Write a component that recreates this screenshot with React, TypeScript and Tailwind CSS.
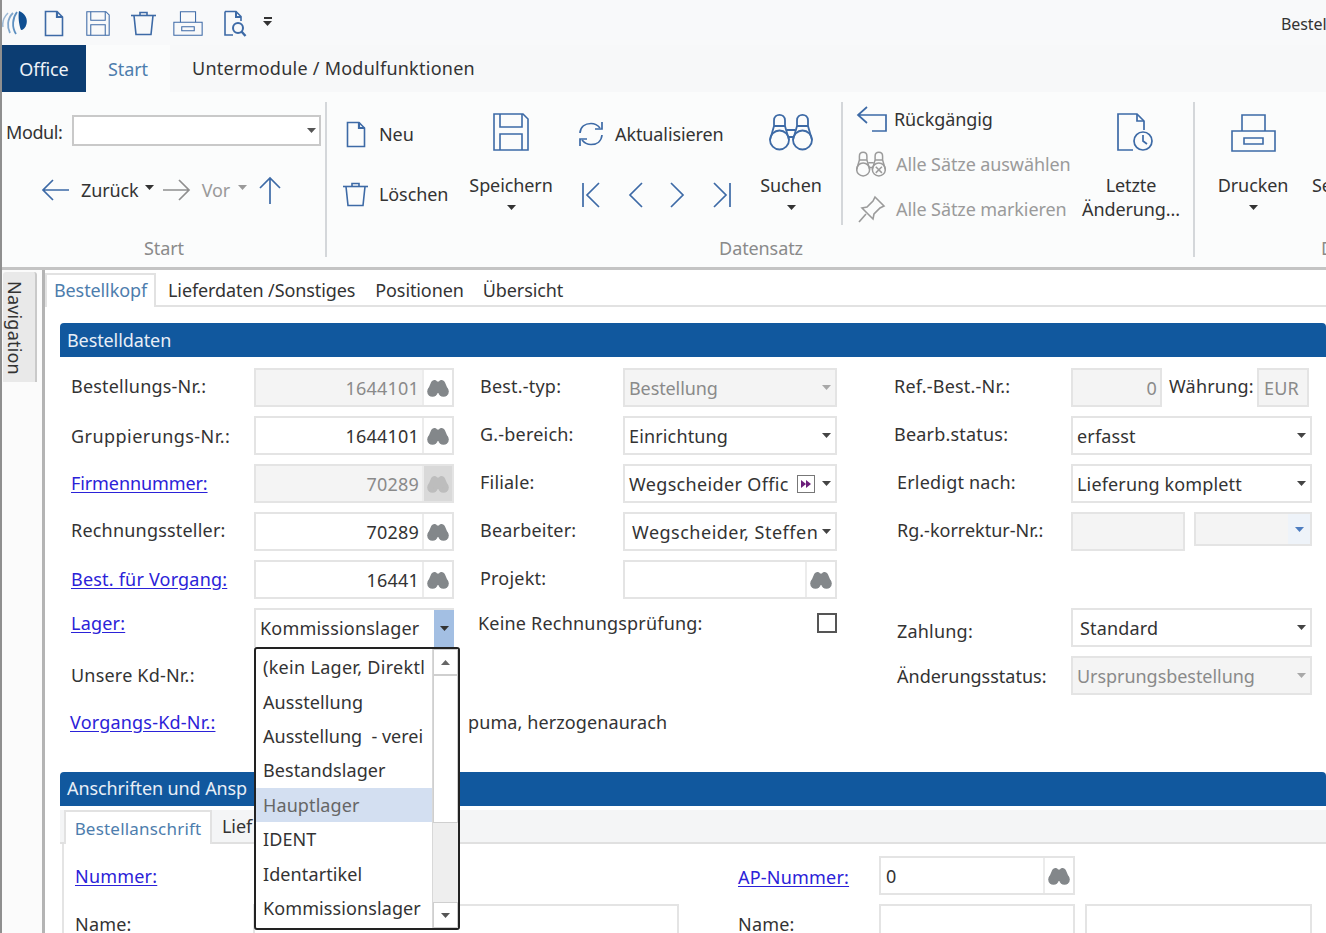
import React from "react";

const S = "#3d6aa6";
const G = "#9b9b9b";

function Ic({ w, h, vb, children, className = "" }: { w: number; h: number; vb?: string; children: React.ReactNode; className?: string }) {
  return (
    <svg width={w} height={h} viewBox={vb ?? `0 0 ${w} ${h}`} fill="none" stroke={S} strokeWidth={1.6} className={`block shrink-0 ${className}`}>
      {children}
    </svg>
  );
}

const Doc = ({ w = 20, h = 27 }: { w?: number; h?: number }) => (
  <Ic w={w} h={h} vb="0 0 20 27"><path d="M1.5 1.5H13L18.5 7V25.5H1.5Z" /><path d="M13 1.5V7H18.5" strokeWidth={2.2} /></Ic>
);
const Trash = ({ w = 27, h = 25 }: { w?: number; h?: number }) => (
  <Ic w={w} h={h} vb="0 0 27 25"><path d="M1 4.5H26" /><path d="M4 4.5L6 23.5H21L23 4.5" /><path d="M10 4.5V1.5H17V4.5" /></Ic>
);
const Floppy = ({ w = 36, h = 38 }: { w?: number; h?: number }) => (
  <Ic w={w} h={h} vb="0 0 36 38"><path d="M1 1H30L35 6V37H1Z" /><path d="M7 1V14H29V1" /><path d="M7 37V21H29V37" /></Ic>
);
const Printer = ({ w = 45, h = 38 }: { w?: number; h?: number }) => (
  <Ic w={w} h={h} vb="0 0 45 38"><path d="M11 17V1H34V17" /><path d="M1 17H44V37H1Z" /><path d="M13 24H32V30H13Z" /></Ic>
);
const PreviewDoc = () => (
  <Ic w={24} h={27}><path d="M2 1.5H13L18 6.5V11" /><path d="M13 1.5V7H18" strokeWidth={2} /><path d="M2 1.5V25H10" /><circle cx={15} cy={18} r={5} strokeWidth={2} /><path d="M18.5 21.5L22.5 26" strokeWidth={2.4} /></Ic>
);
const BinoLarge = ({ color = S, w = 44, h = 38, cross = false }: { color?: string; w?: number; h?: number; cross?: boolean }) => (
  <svg width={w} height={h} viewBox="0 0 44 38" fill="none" stroke={color} strokeWidth={w < 40 ? 2.2 : 1.8} className="block shrink-0">
    <circle cx={10.5} cy={27} r={9.5} />
    <circle cx={33.5} cy={27} r={9.5} />
    <path d="M1 27L5 13V7.5C5 0 16 0 16 7.5V13L20 27" />
    <path d="M43 27L39 13V7.5C39 0 28 0 28 7.5V13L24 27" />
    <path d="M5 13H16M28 13H39" />
    <path d="M18 17H26M20 24H24" />
    {cross && <path d="M29 23L38 32M38 23L29 32" />}
  </svg>
);
const BinoSmall = ({ light = false }: { light?: boolean }) => (
  <svg width={22} height={18} viewBox="0 0 22 18" fill={light ? "#bdbdbd" : "#83878a"} className="block">
    <circle cx={5.5} cy={12.5} r={5.3} />
    <circle cx={16.5} cy={12.5} r={5.3} />
    <path d="M0.8 11L4 3.5C5 0.5 9 0.2 10 2.5H12C13 0.2 17 0.5 18 3.5L21.2 11L13 14H9Z" />
  </svg>
);
const Caret = ({ color = "#333", className = "" }: { color?: string; className?: string }) => (
  <svg width={9} height={5} viewBox="0 0 9 5" fill={color} className={`block shrink-0 ${className}`}><path d="M0 0H9L4.5 5Z" /></svg>
);
const ArrowL = ({ color = S }: { color?: string }) => (
  <svg width={28} height={24} viewBox="0 0 28 24" fill="none" stroke={color} strokeWidth={1.7} className="block shrink-0"><path d="M28 12H2M12 2L2 12L12 22" /></svg>
);
const ArrowR = () => (
  <svg width={28} height={24} viewBox="0 0 28 24" fill="none" stroke="#8f8f8f" strokeWidth={1.7} className="block shrink-0"><path d="M0 12H26M16 2L26 12L16 22" /></svg>
);
const ArrowU = () => (
  <svg width={24} height={28} viewBox="0 0 24 28" fill="none" stroke={S} strokeWidth={1.7} className="block shrink-0"><path d="M12 28V2M2 12L12 2L22 12" /></svg>
);

const Logo = () => (
  <svg width={26} height={26} viewBox="0 0 26 26" fill="none" className="block shrink-0">
    <path d="M1 17C0 12 2 7 6 3" stroke="#9dbad6" strokeWidth={1.5} />
    <path d="M8 23C5 17 5 9 11 3" stroke="#7fa6cc" strokeWidth={1.8} />
    <path d="M14 24C9.5 17 10.5 8 15 2" stroke="#5c8fc0" strokeWidth={1.8} />
    <path d="M17 1C23 3 26 9 24.5 14C23.5 18 21 20 19 20C17 15 16 7 17 1Z" fill="#0f4f92" />
  </svg>
);

function Link({ children, className = "" }: { children: React.ReactNode; className?: string }) {
  return <span className={`text-[#2b22d8] underline underline-offset-2 ${className}`}>{children}</span>;
}

function Field({ w, value, right, disabled, bino, lightBino, className = "", textClass = "" }: {
  w: number; value?: string; right?: boolean; disabled?: boolean; bino?: boolean; lightBino?: boolean; className?: string; textClass?: string;
}) {
  return (
    <div style={{ width: w }} className={`h-[39px] shrink-0 flex border-2 border-[#e4e4e4] ${disabled ? "bg-[#f4f4f4] text-[#8a8a8a]" : "bg-white text-[#333]"} ${className}`}>
      <div className={`flex-1 min-w-0 flex items-center overflow-hidden whitespace-nowrap tracking-[0.2px] ${right ? "justify-end pr-[3px]" : "pl-[5px]"} ${textClass}`}>{value}</div>
      {bino && (
        <div className={`w-[30px] shrink-0 flex items-center justify-center border-l-2 border-[#ececec] ${lightBino ? "bg-[#d9d9d9]" : "bg-white"}`}>
          <BinoSmall light={lightBino} />
        </div>
      )}
    </div>
  );
}

function Combo({ w, value, disabled, children, textClass = "tracking-[0.15px]" }: { w: number; value?: string; disabled?: boolean; children?: React.ReactNode; textClass?: string }) {
  return (
    <div style={{ width: w }} className={`h-[39px] shrink-0 flex items-center border-2 border-[#e4e4e4] ${disabled ? "bg-[#f4f4f4] text-[#8a8a8a]" : "bg-white text-[#333]"}`}>
      <div className={`flex-1 min-w-0 overflow-hidden whitespace-nowrap pl-[4px] ${textClass}`}>{value}</div>
      {children}
      <Caret color={disabled ? "#a8a8a8" : "#444"} className="mx-[4px]" />
    </div>
  );
}

const rowCls = "flex h-[48px] items-start";

function Label({ w, children, className = "" }: { w: number; children: React.ReactNode; className?: string }) {
  return <div style={{ width: w }} className={`shrink-0 h-[39px] flex items-center whitespace-nowrap tracking-[0.2px] ${className}`}>{children}</div>;
}

export default function App() {
  return (
    <div className="w-[1326px] h-[933px] overflow-hidden relative bg-white text-[#333] text-[18px] leading-[24px] [font-family:'Noto_Sans',sans-serif] border-l-2 border-[#8f8f8f] tracking-[-0.1px]">
      {/* quick access */}
      <div className="h-[45px] bg-[#f8f9fa] flex items-center relative">
        <div className="mt-[1px]"><Logo /></div>
        <div className="ml-[16px] mt-[2px]"><Doc /></div>
        <div className="ml-[22px] mt-[2px]"><Floppy w={24} h={25} /></div>
        <div className="ml-[20px] mt-[2px]"><Trash /></div>
        <div className="ml-[16px] mt-[2px]"><Printer w={30} h={25} /></div>
        <div className="ml-[20px] mt-[2px]"><PreviewDoc /></div>
        <div className="ml-[16px] -mt-[3px] flex flex-col gap-[2px] items-center"><div className="w-[8px] h-[2px] bg-[#333]" /><Caret /></div>
        <div className="ml-auto mt-[3px] text-[16px] text-[#333] w-[45px] overflow-hidden whitespace-nowrap">Bestellung</div>
      </div>
      {/* tabs */}
      <div className="h-[47px] bg-[#f7f8f9] flex">
        <div className="w-[84px] bg-[#0c3d72] text-[#eef3f8] flex items-center justify-center">Office</div>
        <div className="w-[84px] bg-[#fbfcfc] text-[#4d7dad] flex items-center justify-center">Start</div>
        <div className="ml-[22px] -mt-[1px] flex items-center text-[#333] tracking-[0.25px]">Untermodule / Modulfunktionen</div>
      </div>
      {/* ribbon */}
      <div className="h-[178px] bg-[#fbfcfc] border-b-[3px] border-[#c4c4c4] flex overflow-hidden">
        {/* Start group */}
        <div className="w-[323px] shrink-0 flex flex-col">
          <div className="h-[144px] pt-[23px]">
            <div className="flex items-center h-[31px] pl-[4px]">
              <span className="w-[66px] shrink-0 whitespace-nowrap mt-[2px] tracking-[-0.4px]">Modul:</span>
              <div className="w-[249px] h-[31px] shrink-0 bg-white border-2 border-[#c9c9c9] flex items-center justify-end pr-[3px]"><Caret color="#555" /></div>
            </div>
            <div className="flex items-center mt-[28px] pl-[39px] h-[32px]">
              <ArrowL />
              <span className="ml-[12px]">Zurück</span>
              <Caret className="ml-[6px] mb-[6px]" />
              <div className="ml-[9px]"><ArrowR /></div>
              <span className="ml-[11px] text-[#9a9a9a]">Vor</span>
              <Caret color="#9a9a9a" className="ml-[8px] mb-[6px]" />
              <div className="ml-[11px]"><ArrowU /></div>
            </div>
          </div>
          <div className="h-[22px] text-center text-[#8a8a8a] pl-[1px]">Start</div>
        </div>
        <div className="w-[2px] h-[155px] mt-[10px] bg-[#d4d7da] shrink-0" />
        {/* Datensatz */}
        <div className="w-[866px] shrink-0 flex flex-col">
          <div className="h-[144px] flex items-start pt-[21px]">
            <div className="ml-[15px] w-[128px] shrink-0 flex flex-col">
              <div className="h-[42px] flex items-center"><div className="ml-[4px] w-[33px]"><Doc /></div>Neu</div>
              <div className="h-[42px] mt-[18px] flex items-center"><div className="w-[37px]"><Trash /></div>Löschen</div>
            </div>
            <div className="w-[82px] shrink-0 flex flex-col items-center">
              <Floppy />
              <span className="mt-[22px]">Speichern</span>
              <Caret className="mt-[8px]" />
            </div>
            <div className="ml-[26px] w-[154px] shrink-0 flex flex-col">
              <div className="h-[42px] flex items-center">
                <svg width={26} height={26} viewBox="0 0 26 26" fill="none" stroke={S} strokeWidth={1.7} className="block shrink-0">
                  <path d="M2 12C2.5 6 7 2.5 13 2.5C17 2.5 20 4.5 22 7" />
                  <path d="M24 1V8H17" />
                  <path d="M24 14C23.5 20 19 23.5 13 23.5C9 23.5 6 21.5 4 19" />
                  <path d="M2 25V18H9" />
                </svg>
                <span className="ml-[11px] whitespace-nowrap">Aktualisieren</span>
              </div>
              <div className="h-[42px] mt-[19px] flex items-center justify-between">
                <svg width={20} height={26} viewBox="0 0 20 26" fill="none" stroke={S} strokeWidth={1.7} className="block ml-[3px]"><path d="M2 1V25M18 1L6 13L18 25" /></svg>
                <svg width={16} height={26} viewBox="0 0 16 26" fill="none" stroke={S} strokeWidth={1.7} className="block"><path d="M15 1L3 13L15 25" /></svg>
                <svg width={16} height={26} viewBox="0 0 16 26" fill="none" stroke={S} strokeWidth={1.7} className="block"><path d="M1 1L13 13L1 25" /></svg>
                <svg width={20} height={26} viewBox="0 0 20 26" fill="none" stroke={S} strokeWidth={1.7} className="block"><path d="M18 1V25M2 1L14 13L2 25" /></svg>
              </div>
            </div>
            <div className="ml-[28px] w-[62px] shrink-0 flex flex-col items-center">
              <BinoLarge />
              <span className="mt-[22px]">Suchen</span>
              <Caret className="mt-[8px]" />
            </div>
            <div className="ml-[19px] w-[2px] h-[123px] -mt-[11px] bg-[#d4d7da] shrink-0" />
            <div className="ml-[13px] w-[225px] shrink-0 flex flex-col -mt-[17px] whitespace-nowrap">
              <div className="h-[45px] flex items-center">
                <svg width={32} height={28} viewBox="0 0 32 28" fill="none" stroke={S} strokeWidth={1.7} className="block shrink-0"><path d="M11 2L2 10L11 18M2 10H30V26H16" /></svg>
                <span className="ml-[6px]">Rückgängig</span>
              </div>
              <div className="h-[45px] flex items-center text-[#9a9a9a]">
                <BinoLarge color={G} w={30} h={26} cross />
                <span className="ml-[10px]">Alle Sätze auswählen</span>
              </div>
              <div className="h-[45px] flex items-center text-[#9a9a9a]">
                <svg width={28} height={28} viewBox="0 0 28 28" fill="none" stroke={G} strokeWidth={1.6} className="block shrink-0 ml-[2px]"><path d="M17 2L26 11L22 13L16 19L15 24L4 13L9 12L15 6Z" /><path d="M8 19L1 27" /></svg>
                <span className="ml-[10px]">Alle Sätze markieren</span>
              </div>
            </div>
            <div className="w-[100px] shrink-0 flex flex-col items-center">
              <svg width={36} height={38} viewBox="0 0 36 38" fill="none" stroke={S} strokeWidth={1.7} className="block shrink-0 ml-[8px]"><path d="M16 37H1V1H20L27 8V17" /><path d="M20 1V8H27" /><circle cx={26} cy={28} r={9} /><path d="M26 22V28L30 31" /></svg>
              <span className="mt-[22px]">Letzte</span>
              <span className="whitespace-nowrap">Änderung...</span>
            </div>
          </div>
          <div className="h-[22px] text-center text-[#8a8a8a] pl-[2px]">Datensatz</div>
        </div>
        <div className="w-[2px] h-[155px] mt-[10px] bg-[#d4d7da] shrink-0" />
        {/* Ausgabe */}
        <div className="flex-1 flex flex-col min-w-0">
          <div className="h-[144px] flex items-start pt-[22px]">
            <div className="ml-[22px] w-[72px] shrink-0 flex flex-col items-center">
              <Printer />
              <span className="mt-[21px]">Drucken</span>
              <Caret className="mt-[8px]" />
            </div>
            <div className="ml-[23px] mt-[59px]">Se</div>
          </div>
          <div className="h-[22px] pl-[126px] text-[#8a8a8a]">D</div>
        </div>
      </div>

      {/* main */}
      <div className="flex h-[663px]">
        {/* rail */}
        <div className="w-[40px] shrink-0 bg-[#fbfbfb] pl-[1px] pt-[2px]">
          <div className="w-[34px] h-[110px] bg-[#e9e9e9] border-r-2 border-[#c9c9c9] rounded-t-[3px] pt-[9px] pr-[8px] text-[18px] text-[#333] tracking-[0.2px] [writing-mode:vertical-rl]">Navigation</div>
        </div>
        <div className="flex-1 min-w-0 border-l-[3px] border-[#b4b4b4] flex flex-col">
          {/* tabs */}
          <div className="h-[34px] mt-[3px] flex border-b-2 border-[#e2e2e2] shrink-0">
            <div className="w-[111px] h-[34px] bg-white border-2 border-b-0 border-[#e2e2e2] flex items-center justify-center text-[#4d7dad] pb-[2px] z-10">Bestellkopf</div>
            <div className="ml-[12px] pt-[2px] flex items-center whitespace-nowrap">Lieferdaten /Sonstiges</div>
            <div className="ml-[20px] pt-[2px] flex items-center">Positionen</div>
            <div className="ml-[19px] pt-[2px] flex items-center">Übersicht</div>
          </div>
          {/* section 1 */}
          <div className="ml-[15px] mt-[16px] h-[34px] bg-[#11589e] rounded-t-[4px] text-[#e8eff7] flex items-center pl-[7px] shrink-0">Bestelldaten</div>
          <div className="ml-[15px] pt-[11px] pl-[11px] h-[415px] shrink-0 flex">
            {/* col 1 */}
            <div className="w-[383px] shrink-0 flex flex-col">
              <div className={rowCls}><Label w={183} className="-mt-[2px]">Bestellungs-Nr.:</Label><Field w={200} value="1644101" right disabled bino /></div>
              <div className={rowCls}><Label w={183} className="tracking-[0.45px]">Gruppierungs-Nr.:</Label><Field w={200} value="1644101" right bino /></div>
              <div className={rowCls}><Label w={183} className="-mt-[1px]"><Link className="tracking-[-0.1px]">Firmennummer:</Link></Label><Field w={200} value="70289" right disabled bino lightBino /></div>
              <div className={rowCls}><Label w={183} className="-mt-[2px]">Rechnungssteller:</Label><Field w={200} value="70289" right bino /></div>
              <div className={rowCls}><Label w={183} className="-mt-[1px]"><Link>Best. für Vorgang:</Link></Label><Field w={200} value="16441" right bino /></div>
              <div className={rowCls}>
                <Label w={183} className="-mt-[5px]"><Link>Lager:</Link></Label>
                <div className="w-[200px] h-[39px] flex items-center border-t-2 border-l-2 border-[#e4e4e4] bg-white">
                  <span className="flex-1 pl-[4px] tracking-[0.2px] -mt-[1px]">Kommissionslager</span>
                  <div className="w-[20px] h-full bg-[#a3bfe3] flex items-center justify-center"><Caret color="#333" /></div>
                </div>
              </div>
              <div className={rowCls}><Label w={183} className="-mt-[1px]">Unsere Kd-Nr.:</Label></div>
              <div className={rowCls}><Label w={183} className="-ml-[1px] -mt-[2px]"><Link>Vorgangs-Kd-Nr.:</Link></Label></div>
            </div>
            {/* col 2 */}
            <div className="w-[383px] shrink-0 flex flex-col pl-[26px]">
              <div className={rowCls}><Label w={143} className="-mt-[2px]">Best.-typ:</Label><Combo w={214} value="Bestellung" disabled textClass="tracking-[-0.1px]" /></div>
              <div className={rowCls}><Label w={143} className="-mt-[2px]">G.-bereich:</Label><Combo w={214} value="Einrichtung" /></div>
              <div className={rowCls}><Label w={143} className="-mt-[2px]">Filiale:</Label>
                <Combo w={214} value="Wegscheider Offic" textClass="tracking-[0.35px]">
                  <div className="w-[18px] h-[18px] mr-[3px] border border-[#777] bg-white flex items-center justify-center shrink-0">
                    <svg width={10} height={8} viewBox="0 0 10 8" fill="#6b1f7a" className="block"><path d="M0 0L5 4L0 8ZM5 0L10 4L5 8Z" /></svg>
                  </div>
                </Combo>
              </div>
              <div className={rowCls}><Label w={143} className="-mt-[2px]">Bearbeiter:</Label><Combo w={214} value="Wegscheider, Steffen" textClass="pl-[7px] tracking-[0.5px]" /></div>
              <div className={rowCls}><Label w={143} className="-mt-[2px]">Projekt:</Label><Field w={214} bino /></div>
              <div className={rowCls}>
                <div className="w-[360px] -ml-[2px] h-[30px] flex items-center justify-between tracking-[0.2px]">
                  <span>Keine Rechnungsprüfung:</span>
                  <div className="w-[20px] h-[20px] border-2 border-[#555] bg-white" />
                </div>
              </div>
              <div className={rowCls} />
              <div className={rowCls}><span className="-ml-[12px] mt-[6px] whitespace-nowrap tracking-[0.1px]">puma, herzogenaurach</span></div>
            </div>
            {/* col 3 */}
            <div className="flex-1 min-w-0 flex flex-col pl-[57px]">
              <div className={rowCls}>
                <Label w={177} className="-mt-[2px]">Ref.-Best.-Nr.:</Label>
                <Field w={91} value="0" right disabled />
                <span className="ml-[7px] w-[84px] shrink-0 h-[39px] flex items-center -mt-[2px] tracking-[0.2px]">Währung:</span>
                <Field w={52} value="EUR" disabled className="ml-[4px]" />
              </div>
              <div className={rowCls}><Label w={177} className="-mt-[2px]">Bearb.status:</Label><Combo w={241} value="erfasst" /></div>
              <div className={rowCls}><Label w={177} className="-mt-[2px] pl-[3px]">Erledigt nach:</Label><Combo w={241} value="Lieferung komplett" /></div>
              <div className={rowCls}>
                <Label w={177} className="-mt-[2px] pl-[3px] tracking-[0px]">Rg.-korrektur-Nr.:</Label>
                <Field w={114} disabled />
                <div className="ml-[9px] w-[118px] h-[34px] bg-[#f4f4f4] border-2 border-[#e4e4e4] flex justify-end">
                  <div className="w-[22px] h-full bg-[#eef3f9] flex items-center justify-center"><Caret color="#4d7dc0" /></div>
                </div>
              </div>
              <div className={rowCls} />
              <div className={rowCls}><Label w={177} className="mt-[3px] pl-[3px]">Zahlung:</Label><Combo w={241} value="Standard" textClass="pl-[7px] tracking-[0.15px]" /></div>
              <div className={rowCls}><Label w={177} className="pl-[3px] tracking-[0px]">Änderungsstatus:</Label><Combo w={241} value="Ursprungsbestellung" disabled textClass="tracking-[-0.05px]" /></div>
            </div>
          </div>
          {/* section 2 */}
          <div className="ml-[15px] h-[34px] bg-[#11589e] rounded-t-[4px] text-[#e8eff7] flex items-center pl-[7px] pb-[2px] shrink-0 whitespace-nowrap">Anschriften und Ansp</div>
          <div className="ml-[15px] mt-[4px] h-[34px] bg-[#f4f5f6] border-b-2 border-[#e0e0e0] flex shrink-0">
            <div className="ml-[4px] w-[148px] h-[34px] bg-white border-2 border-b-0 border-[#e2e2e2] flex items-center justify-center text-[#4d7dad] text-[17px] tracking-[0.2px] pt-[2px] z-10">Bestellanschrift</div>
            <div className="ml-[10px] flex items-center">Lief</div>
          </div>
          <div className="ml-[17px] flex-1 border-l-2 border-[#e4e4e4] pt-[12px] flex">
            <div className="pl-[11px] w-[674px] shrink-0 flex flex-col">
              <div className={rowCls}><Label w={178}><Link>Nummer:</Link></Label></div>
              <div className={rowCls}><Label w={178}>Name:</Label><Field w={426} /></div>
            </div>
            <div className="flex flex-col">
              <div className={rowCls}><Label w={141} className="mt-[1px]"><Link>AP-Nummer:</Link></Label><Field w={196} value="0" bino /></div>
              <div className={rowCls}><Label w={141}>Name:</Label><Field w={196} /><Field w={227} className="ml-[10px]" /></div>
            </div>
          </div>
        </div>
      </div>

      {/* dropdown overlay */}
      <div className="absolute left-[252px] top-[647px] w-[206px] h-[283px] bg-white border-2 border-[#222] rounded-[3px] flex overflow-hidden">
        <div className="flex-1 min-w-0 overflow-hidden whitespace-pre tracking-[0.1px] pt-[1px]">
          {["(kein Lager, Direktl", "Ausstellung", "Ausstellung  - verei", "Bestandslager", "Hauptlager", "IDENT", "Identartikel", "Kommissionslager"].map((t, i) => (
            <div key={t} className={`h-[34.4px] flex items-center pl-[7px] ${i === 4 ? "bg-[#d3dff1] text-[#666]" : ""} ${i === 0 ? "tracking-[0.3px]" : ""} ${i === 2 ? "tracking-[0px]" : ""}`}>{t}</div>
          ))}
        </div>
        <div className="w-[26px] shrink-0 bg-[#eeeeee] flex flex-col border-l border-[#d8d8d8]">
          <div className="h-[26px] bg-white border border-[#cfcfcf] flex items-center justify-center"><Caret color="#666" className="rotate-180" /></div>
          <div className="h-[148px] bg-white border border-[#cfcfcf]" />
          <div className="flex-1" />
          <div className="h-[26px] bg-white border border-[#cfcfcf] flex items-center justify-center"><Caret color="#555" /></div>
        </div>
      </div>
    </div>
  );
}
